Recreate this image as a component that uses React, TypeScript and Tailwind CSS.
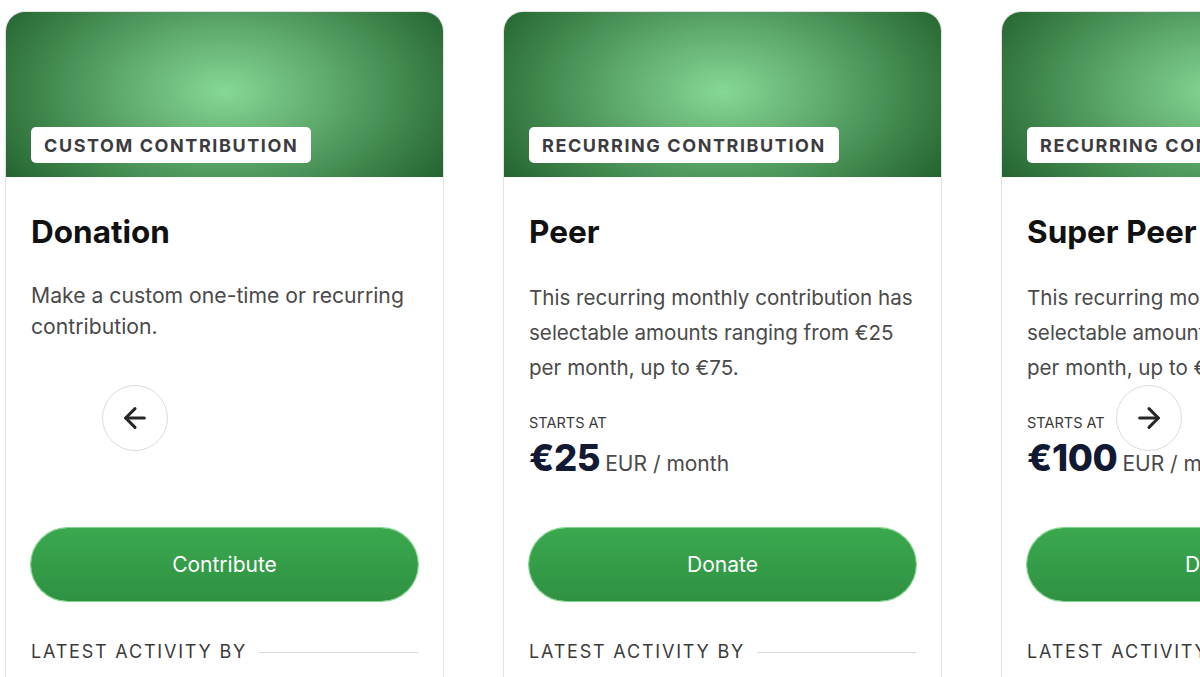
import { ArrowLeft, ArrowRight } from "lucide-react";

interface Tier {
  badge: string;
  title: string;
  description: string;
  descClass: string;
  price?: string;
  cta: string;
}

const tiers: Tier[] = [
  {
    badge: "CUSTOM CONTRIBUTION",
    title: "Donation",
    description: "Make a custom one-time or recurring contribution.",
    descClass: "text-[21.2px] leading-[31px]",
    cta: "Contribute",
  },
  {
    badge: "RECURRING CONTRIBUTION",
    title: "Peer",
    description:
      "This recurring monthly contribution has selectable amounts ranging from €25 per month, up to €75.",
    descClass: "text-[20.6px] leading-[35px]",
    price: "€25",
    cta: "Donate",
  },
  {
    badge: "RECURRING CONTRIBUTION",
    title: "Super Peer",
    description:
      "This recurring monthly contribution has selectable amounts ranging from €100 per month, up to €250.",
    descClass: "text-[20.6px] leading-[35px]",
    price: "€100",
    cta: "Donate",
  },
];

function TierCard({ tier }: { tier: Tier }) {
  return (
    <div className="w-[439px] shrink-0 rounded-[20px] border border-[#e2e2e2] bg-white overflow-hidden flex flex-col">
      {/* Header */}
      <div className="h-[165px] flex items-end px-[25px] pb-[14px] bg-[radial-gradient(ellipse_60%_95%_at_50%_48%,#86d896_0%,#5aa468_45%,#3b8147_75%,#24632f_100%)]">
        <span className="bg-white rounded-[5px] px-[13px] h-[36px] flex items-center text-[18px] font-bold tracking-[0.088em] text-[#3c3c40]">
          {tier.badge}
        </span>
      </div>

      {/* Body */}
      <div className="px-[25px] h-[351px] pt-[36px]">
        <h2 className="text-[31.5px] leading-[38px] font-bold text-[#111]">{tier.title}</h2>
        <p className={`mt-[29px] text-[#4a4a4a] ${tier.descClass}`}>{tier.description}</p>
        {tier.price && (
          <div className="mt-[28px]">
            <div className="text-[14.5px] leading-[20px] text-[#3a3a3a]">STARTS AT</div>
            <div className="flex items-baseline gap-[5px] mt-[3px]">
              <span className="text-[36.5px] leading-[44px] font-extrabold text-[#121a33] tracking-[-0.01em]">
                {tier.price}
              </span>
              <span className="text-[21px] text-[#4a4a4a]">EUR / month</span>
            </div>
          </div>
        )}
      </div>

      <div className="px-[25px]">
        <button className="w-full h-[73px] rounded-full bg-gradient-to-b from-[#3aa84f] to-[#2f9242] shadow-[0_0_0_1px_#7fd68c] text-white text-[21px]">
          {tier.cta}
        </button>
        <div className="mt-[40px] flex items-center gap-[12px]">
          <span className="text-[18px] leading-[22px] tracking-[0.1em] text-[#3a3a3a] whitespace-nowrap">
            LATEST ACTIVITY BY
          </span>
          <div className="flex-1 h-px bg-[#d8d8d8]" />
        </div>
        <div className="h-[80px]" />
      </div>
    </div>
  );
}

function NavButton({ dir }: { dir: "left" | "right" }) {
  const pos = dir === "left" ? "left-[102px]" : "left-[1116px]";
  return (
    <button
      className={`absolute top-[385px] ${pos} w-[66px] h-[66px] rounded-full bg-white border border-[#dcdcdc] flex items-center justify-center text-[#262626]`}
    >
      {dir === "left" ? (
        <ArrowLeft size={32} strokeWidth={2.3} />
      ) : (
        <ArrowRight size={32} strokeWidth={2.3} />
      )}
    </button>
  );
}

export default function App() {
  return (
    <div
      className="relative w-[1200px] h-[677px] overflow-hidden bg-white"
      style={{ fontFamily: "Inter, 'Noto Sans', sans-serif" }}
    >
      <div className="flex gap-[59px] pl-[5px] pt-[11px]">
        {tiers.map((t) => (
          <TierCard key={t.title} tier={t} />
        ))}
      </div>
      <NavButton dir="left" />
      <NavButton dir="right" />
    </div>
  );
}
